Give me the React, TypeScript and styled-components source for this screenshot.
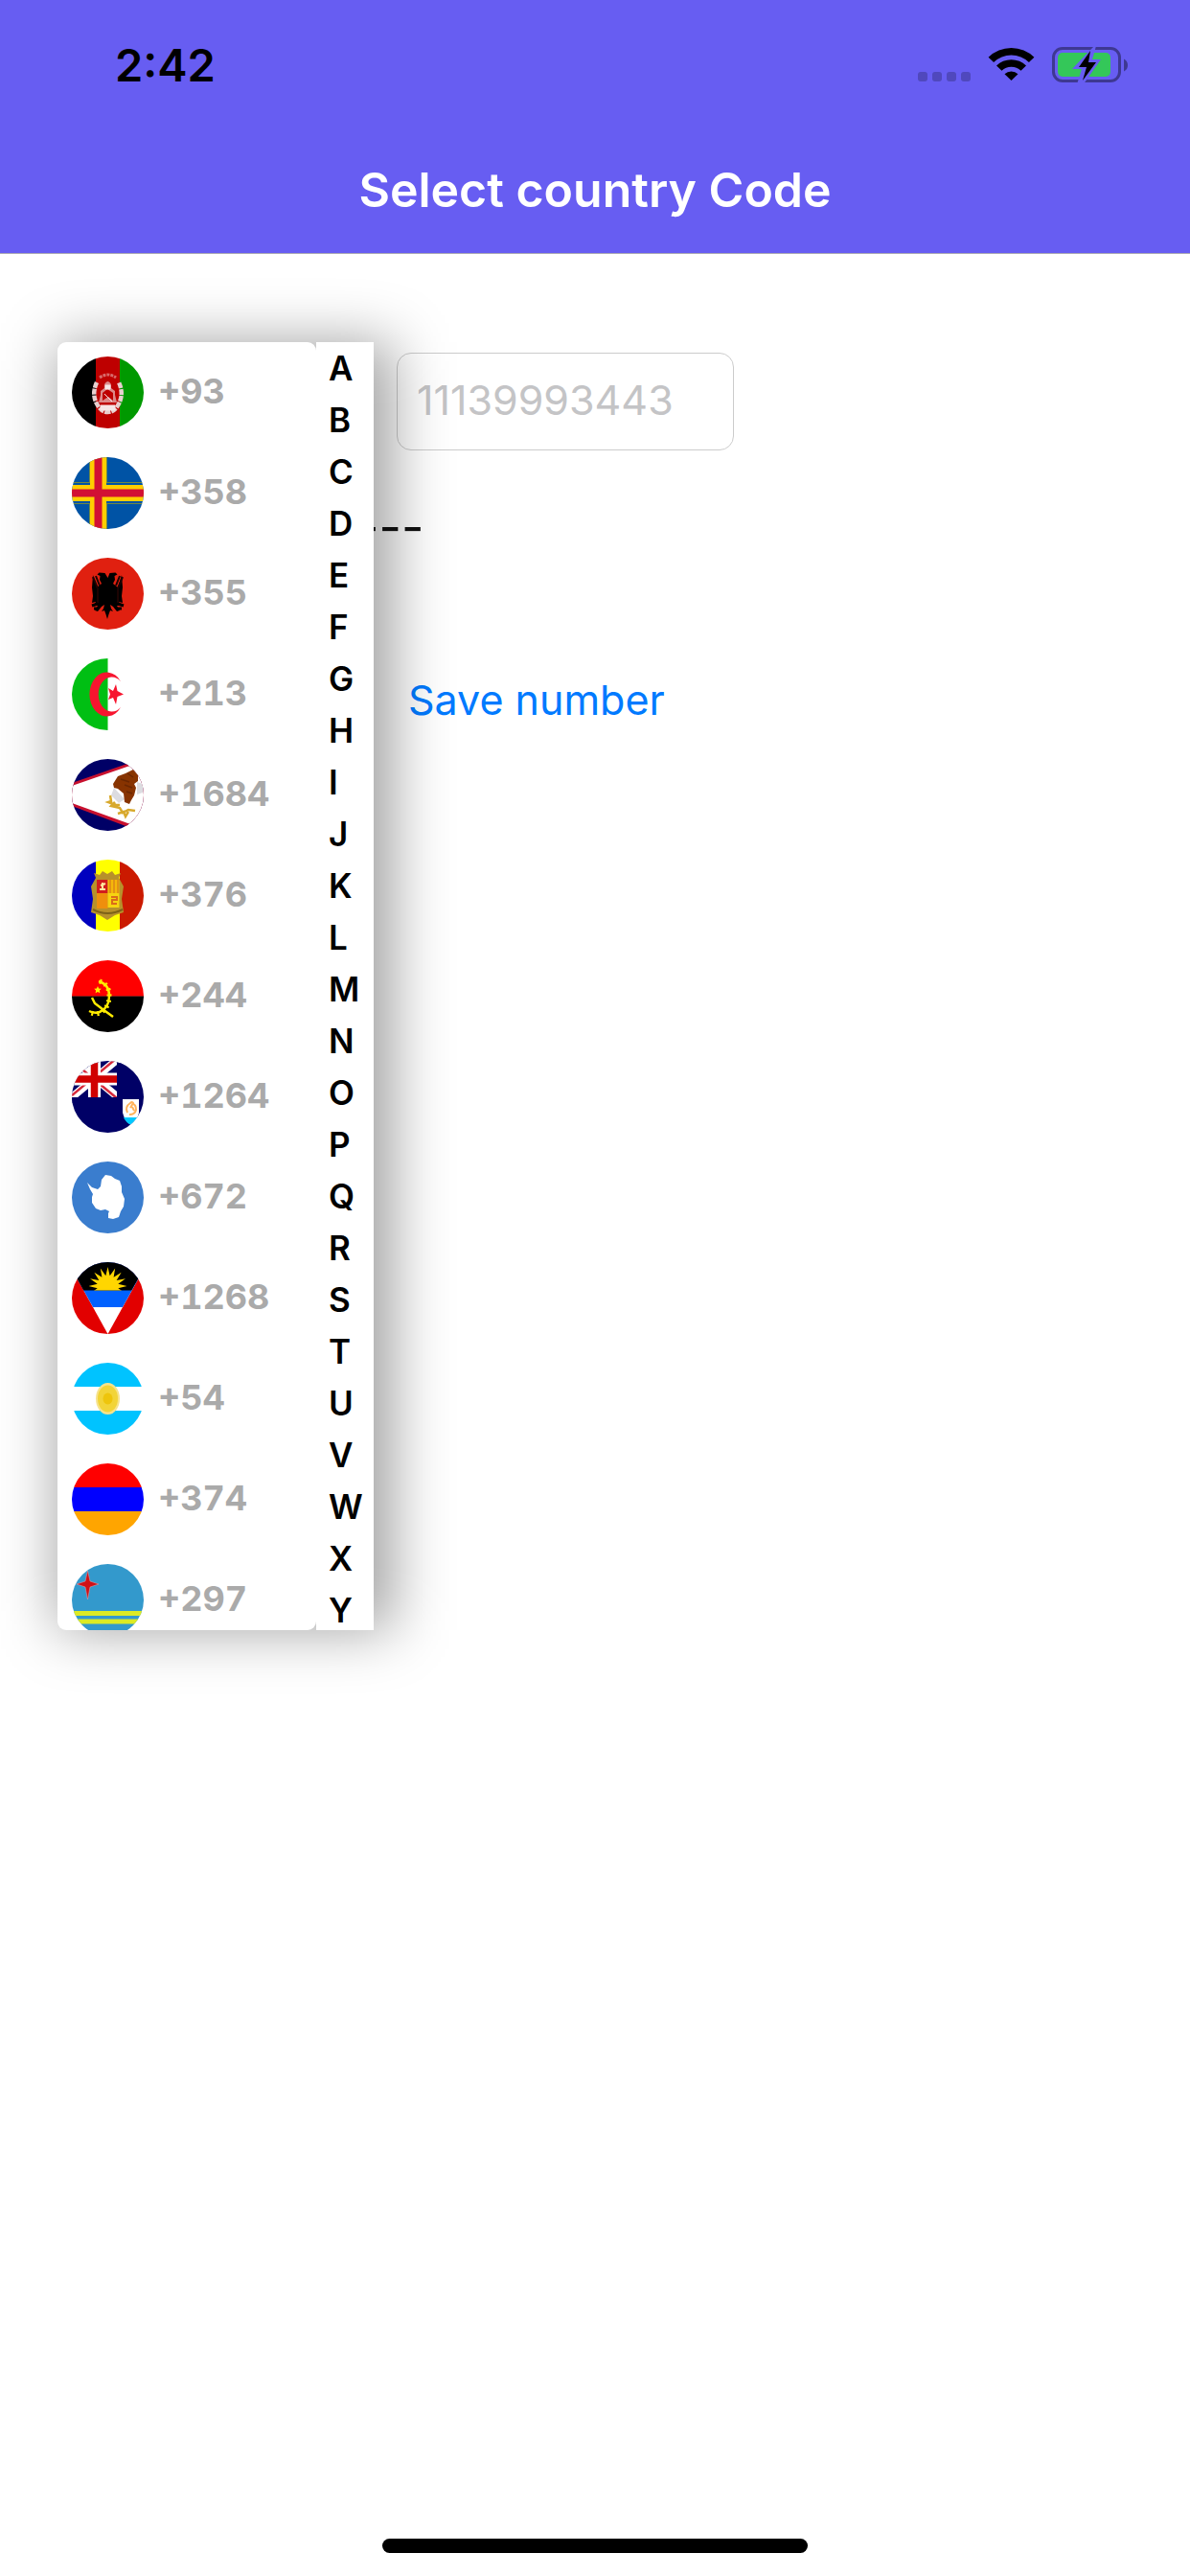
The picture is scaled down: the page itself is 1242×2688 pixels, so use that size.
import React from "react";
import styled, { createGlobalStyle } from "styled-components";

const GlobalStyle = createGlobalStyle`
  * { box-sizing: border-box; }
  body { margin: 0; background: #fff; font-family: Inter, "Liberation Sans", sans-serif; }
`;

const Screen = styled.div`
  min-height: 100vh;
  display: flex;
  flex-direction: column;
  overflow: hidden;
`;

const Header = styled.header`
  background: #675df2;
  border-bottom: 1px solid #aaa8b4;
`;

const StatusBar = styled.div`
  height: 132px;
  display: flex;
  align-items: center;
  justify-content: space-between;
  padding: 3px 64px 0 120px;
`;

const Clock = styled.time`
  font-size: 47px;
  line-height: 58px;
  font-weight: 600;
  color: #000;
`;

const StatusIcons = styled.svg`
  display: block;
  width: 220px;
  height: 38px;
`;

const Title = styled.h1`
  margin: 0;
  height: 132px;
  display: flex;
  align-items: center;
  justify-content: center;
  font-size: 50px;
  line-height: 60px;
  font-weight: 600;
  color: #fff;
`;

const Form = styled.form`
  position: relative;
  flex: 1;
  display: flex;
  flex-direction: column;
  align-items: flex-start;
  padding: 103px 60px 0;
`;

const NumberField = styled.input`
  width: 352px;
  height: 102px;
  margin-left: 354px;
  padding: 0 20px 4px;
  border: 1px solid #ccc;
  border-radius: 15px;
  background: #fff;
  font: 400 43px/50px Inter, "Liberation Sans", sans-serif;
  &::placeholder { color: #c4c4c6; opacity: 1; }
`;

const Result = styled.output`
  margin: 50px 0 0 312px;
  font-size: 51px;
  line-height: 60px;
  color: #111;
`;

const SaveButton = styled.button`
  margin: 120px 0 0 366px;
  padding: 0;
  border: 0;
  background: none;
  color: #007aff;
  font: 400 43px/60px Inter, "Liberation Sans", sans-serif;
`;

const Picker = styled.div`
  position: absolute;
  z-index: 1;
  top: 92px;
  left: 60px;
  display: flex;
  max-height: 1344px;

  &::before {
    content: "";
    position: absolute;
    z-index: -1;
    inset: 0 -20px 0 0;
    background: rgba(0, 0, 0, 0.37);
    filter: blur(30px);
  }
`;

const CountryList = styled.ul`
  width: 270px;
  margin: 0;
  padding: 0;
  list-style: none;
  overflow: hidden;
  background: #fff;
  border-radius: 9px;
`;

const CountryButton = styled.button`
  width: 100%;
  height: 105px;
  display: flex;
  align-items: center;
  gap: 15px;
  padding: 0 15px;
  border: 0;
  background: none;
  color: #aaa;
  font: 700 36px/44px Inter, "Liberation Sans", sans-serif;
  font-variant-numeric: tabular-nums;
`;

const DialCode = styled.span`
  padding-bottom: 3px;
`;

const Flag = styled.svg`
  width: 75px;
  height: 75px;
  border-radius: 50%;
  flex: none;
`;

const LetterIndex = styled.nav`
  width: 60px;
  display: flex;
  flex-direction: column;
  overflow: hidden;
  background: #fff;
`;

const Letter = styled.a`
  flex: none;
  padding-left: 13px;
  font-size: 35px;
  line-height: 54px;
  font-weight: 600;
  color: #000;
  text-decoration: none;
`;

const HomeBar = styled.div`
  align-self: center;
  width: 444px;
  height: 15px;
  margin-bottom: 24px;
  border-radius: 8px;
  background: #000;
`;

const Stripes = ({ colors, vertical }: { colors: string[]; vertical?: boolean }) => {
  const step = 75 / colors.length;
  return (
    <>
      {colors.map((c, i) => (
        <rect key={i} fill={c} x={vertical ? i * step : 0} y={vertical ? 0 : i * step}
          width={vertical ? step + 0.3 : 75} height={vertical ? 75 : step + 0.3} />
      ))}
    </>
  );
};

const sunRays = (cx: number, cy: number, outer: number, inner: number, n: number) =>
  Array.from({ length: n * 2 }, (_, i) => {
    const r = i % 2 ? inner : outer;
    const a = (Math.PI * i) / n - Math.PI / 2;
    return `${cx + r * Math.cos(a)},${cy + r * Math.sin(a)}`;
  }).join(" ");

const countries: { name: string; code: string; flag: React.ReactNode }[] = [
  {
    name: "Afghanistan", code: "+93",
    flag: (
      <>
        <Stripes vertical colors={["#000", "#be0000", "#009900"]} />
        <path d="M29 22q8.500-6 17 0" fill="none" stroke="#d86a6a" strokeWidth="3" strokeDasharray="3 1" />
        <path d="M26 27q-6 13 1 24 4 7 10.500 7t10.500-7q7-11 1-24" fill="none" stroke="#e8d0d0" strokeWidth="4.500" strokeDasharray="6 1" />
        <path d="M34 29q3.500-6 7 0v4l4 3v4l2 8H28l2-8v-4l4-3z" fill="#dc8a8a" />
        <path d="M32 46v-8l5-4 6 4v8l-5-4z" fill="#be0000" />
        <path d="M35 30h5v4h-5zM34 39l8 8M30 51h15v5H30z" fill="#f6e6e6" stroke="#f6e6e6" />
      </>
    ),
  },
  {
    name: "Åland Islands", code: "+358",
    flag: (
      <>
        <rect width="75" height="75" fill="#0053a5" />
        <path d="M0 37.500h75M27.500 0v75" stroke="#ffce00" strokeWidth="17" />
        <path d="M0 37.500h75M27.500 0v75" stroke="#d21034" strokeWidth="8" />
        <path d="M0 26.500h19M36 26.500h39M0 48.500h19M36 48.500h39M18.500 0v27M36.500 0v27M18.500 48v27M36.500 48v27" stroke="#6d8845" strokeWidth="1" />
      </>
    ),
  },
  {
    name: "Albania", code: "+355",
    flag: (
      <>
        <rect width="75" height="75" fill="#e02010" />
        <path d="M37.500 21l-3-5-6-.500-2 2 3 1.500-.500 4 2 4-5 4-4-13-1 13 1 9-1 7 4-1-2 4 4 0-3 5 3 1 4-5 3-2-1 4-2 3 3-1 1.500 4 1.500 5 1.500-5 1.500-4 3 1-2-3-1-4 3 2 4 5 3-1-3-5 4 0-2-4 4 1-1-7 1-9-1-13-4 13-5-4 2-4-.500-4 3-1.500-2-2-6 .500z" fill="#000" />
        <path d="M22 20l5 12v15M25 19l4 10M53 20l-5 12v15M50 19l-4 10" fill="none" stroke="#1c0302" strokeWidth="2" />
        <path d="M21 50l6-2M23 53h4M54 50l-6-2M52 53h-4" stroke="#000" strokeWidth="3" />
      </>
    ),
  },
  {
    name: "Algeria", code: "+213",
    flag: (
      <>
        <rect width="75" height="75" fill="#fff" />
        <rect width="37.500" height="75" fill="#00bf13" />
        <path d="M51 24a18 23 0 1 0 0 27a14 18 0 1 1 0-27z" fill="#f7152f" />
        <polygon points="46,27 47.500,34 54,37.500 47.500,40 46,48 43,41 38,43 40,37.500 38,31 43,34" fill="#f7152f" />
      </>
    ),
  },
  {
    name: "American Samoa", code: "+1684",
    flag: (
      <>
        <rect width="75" height="75" fill="#006" />
        <path d="M0 25L75-1v78L0 49z" fill="#c8102e" />
        <path d="M0 28L75 2v71L0 46z" fill="#fff" />
        <path d="M68 24l6 2v9l-6 2zM44 30l-3 8 8 8 6-4z" fill="#dcdce0" />
        <path d="M48 18l8-3 8-4 5 4v8l-4 3 2 4-2 8-3 5-2 4-5-2-1-9-6-5-4-1-1-4z" fill="#873300" />
        <path d="M51 21l9 3M55 27l8 3M58 15l6 4M57 34l6 2" stroke="#6b2700" strokeWidth="1.500" />
        <path d="M40 38l1 6-3 1 8 3 4 0M45 45l-4 4 9 2 3 5 6-3 7 1M48 57l6-2 2 5 3-5" fill="none" stroke="#d8a92d" strokeWidth="2.500" />
      </>
    ),
  },
  {
    name: "Andorra", code: "+376",
    flag: (
      <>
        <Stripes vertical colors={["#0000bf", "#ffff00", "#cb1a00"]} />
        <path d="M25 19l-2-5 6 2 3-4 5 3 5-3 3 4 6-2-2 5 5 9-2 13 2 14-9 3-8 5-8-5-9-3 2-14-2-13z" fill="#b7912b" />
        <rect x="26" y="21" width="11.500" height="14" fill="#d21d1d" />
        <rect x="37.500" y="21" width="12" height="14" fill="#f5b80a" />
        <rect x="26" y="35" width="11.500" height="16" fill="#ef8f0d" />
        <rect x="37.500" y="35" width="12" height="15" fill="#f6d411" />
        <path d="M29 31h6M32 24v6M30 27l5-2" stroke="#ffe9a0" strokeWidth="2" fill="none" />
        <path d="M40 21v14M44 21v14M48 21v14" stroke="#d5791b" strokeWidth="1.200" />
        <path d="M41 39h6v3h-5v4h5" stroke="#db6b1a" strokeWidth="2" fill="none" />
        <path d="M22 52q15 8 31 0" stroke="#7d6218" strokeWidth="2" fill="none" />
      </>
    ),
  },
  {
    name: "Angola", code: "+244",
    flag: (
      <>
        <Stripes colors={["#ff0000", "#000"]} />
        <path d="M28 22q11 3 11 15 0 13-10 17-5 2-11-1" fill="none" stroke="#ffec00" strokeWidth="2.500" />
        <path d="M29 22q10 3 10 15 0 13-10 18-5 2-11-1" fill="none" stroke="#ffec00" strokeWidth="5" strokeDasharray="2 4" />
        <path d="M21 39l3 6 8 6 11 8" fill="none" stroke="#ffec00" strokeWidth="2.500" />
        <polygon points={sunRays(27, 31, 4, 2, 5)} fill="#ffec00" />
      </>
    ),
  },
  {
    name: "Anguilla", code: "+1264",
    flag: (
      <>
        <rect width="75" height="75" fill="#006" />
        <path d="M0-2L47 37M47-1L0 38" stroke="#fff" strokeWidth="8" />
        <path d="M0 0L47 39M47-3L0 36" stroke="#d62a3c" strokeWidth="2.500" />
        <path d="M23.500 0v38M0 19h47" stroke="#fff" strokeWidth="13" />
        <path d="M23.500 0v38M0 19h47" stroke="#d00000" strokeWidth="7.500" />
        <path d="M47 0h10v40H47zM0 38h57v6H0z" fill="#006" />
        <path d="M53 40h17v14q-1 9-8 13-7-4-9-13z" fill="#fff" />
        <path d="M54 59h15q-2 5-7 8-6-3-8-8z" fill="#00c8ff" />
        <path d="M58 54q-3-6 3-10 2-2 3 0l-3 5M60 56q6 0 7-5 0-5-3-6M63 48l2 4" fill="none" stroke="#ffb35c" strokeWidth="2" />
      </>
    ),
  },
  {
    name: "Antarctica", code: "+672",
    flag: (
      <>
        <rect width="75" height="75" fill="#3a7dce" />
        <path d="M16 22l5 5 6 2 3-3 1-7 4-5 6 1 4 3 5 2 2 6v6l3 7-1 8-3 5-2 6-6 2-5-1v-5l1-2-4-2-5 1-5-2-4-6v-6l1-3-3-5z" fill="#fff" />
      </>
    ),
  },
  {
    name: "Antigua and Barbuda", code: "+1268",
    flag: (
      <>
        <rect width="75" height="75" fill="#e20000" />
        <path d="M-4 0h83L37.500 75z" fill="#fff" />
        <path d="M-4 0h83L52.900 47H22.100z" fill="#0061ff" />
        <path d="M-4 0h83L62.300 29.500H12.200z" fill="#000" />
        <clipPath id="horizon"><rect width="75" height="29.500" /></clipPath>
        <polygon clipPath="url(#horizon)" points={sunRays(37.5, 25, 20, 11, 16)} fill="#ffd600" />
      </>
    ),
  },
  {
    name: "Argentina", code: "+54",
    flag: (
      <>
        <Stripes colors={["#00c3ff", "#fff", "#00c3ff"]} />
        <ellipse cx="37.500" cy="37.500" rx="12.500" ry="16.500" fill="#f7e38c" />
        <ellipse cx="37.500" cy="37.500" rx="10.500" ry="14" fill="#f2d438" />
        <ellipse cx="37.500" cy="37.500" rx="5" ry="6" fill="#eec50c" />
      </>
    ),
  },
  { name: "Armenia", code: "+374", flag: <Stripes colors={["#ff0000", "#0000ff", "#ffa500"]} /> },
  {
    name: "Aruba", code: "+297",
    flag: (
      <>
        <rect width="75" height="75" fill="#3399cc" />
        <path d="M0 51.500h75M0 60h75" stroke="#dcea24" strokeWidth="5" />
        <path d="M16.500 7l2.500 11 9 3-9 3-2.500 13-2.500-13-9-3 9-3z" fill="#d01016" stroke="#e9a0a8" strokeWidth="0.500" />
      </>
    ),
  },
];

const letters = "ABCDEFGHIJKLMNOPQRSTUVWXY".split("");

export default function App() {
  return (
    <Screen>
      <GlobalStyle />
      <Header>
        <StatusBar>
          <Clock>2:42</Clock>
          <StatusIcons viewBox="0 0 220 38" role="img" aria-label="Wi-Fi on, battery charging">
            <g fill="#5048bd">
              {[0, 15, 30, 45].map((x) => <rect key={x} x={x} y="26" width="10" height="10" rx="3" />)}
            </g>
            <g>
              <path d="M73.600 10.800a34 34 0 0 1 47.800 0l-5.500 5.200a26.500 26.500 0 0 0-36.800 0z" />
              <path d="M82 19.400a22.500 22.500 0 0 1 31 0l-5.500 5.300a14.500 14.500 0 0 0-20 0z" />
              <path d="M90.500 28.200a10.500 10.500 0 0 1 14 0L97.500 35z" />
            </g>
            <rect x="141.500" y="1.500" width="69" height="34" rx="9.500" fill="none" stroke="#3e3892" strokeWidth="3" />
            <path d="M215 12.500q4 2 4 6.500t-4 6.500z" fill="#3e3892" />
            <rect x="146" y="6" width="55" height="25" rx="5" fill="#34c759" />
            <path d="M184-1L161 23h10l-5 16 6 1 19-27h-9l4-14z" fill="#675df2" />
            <path d="M180 4L168 21h8l-4 14 14-19h-8z" fill="#000" />
          </StatusIcons>
        </StatusBar>
        <Title>Select country Code</Title>
      </Header>
      <Form onSubmit={(e) => e.preventDefault()}>
        <NumberField type="tel" aria-label="Phone number" placeholder="11139993443" />
        <Result>---</Result>
        <SaveButton type="submit">Save number</SaveButton>
        <Picker>
          <CountryList>
            {countries.map((c) => (
              <li key={c.name}>
                <CountryButton type="button" aria-label={`${c.name} ${c.code}`}>
                  <Flag viewBox="0 0 75 75" aria-hidden="true">{c.flag}</Flag>
                  <DialCode>{c.code}</DialCode>
                </CountryButton>
              </li>
            ))}
          </CountryList>
          <LetterIndex aria-label="Alphabet">
            {letters.map((l) => <Letter key={l} href={`#${l}`}>{l}</Letter>)}
          </LetterIndex>
        </Picker>
      </Form>
      <HomeBar />
    </Screen>
  );
}
